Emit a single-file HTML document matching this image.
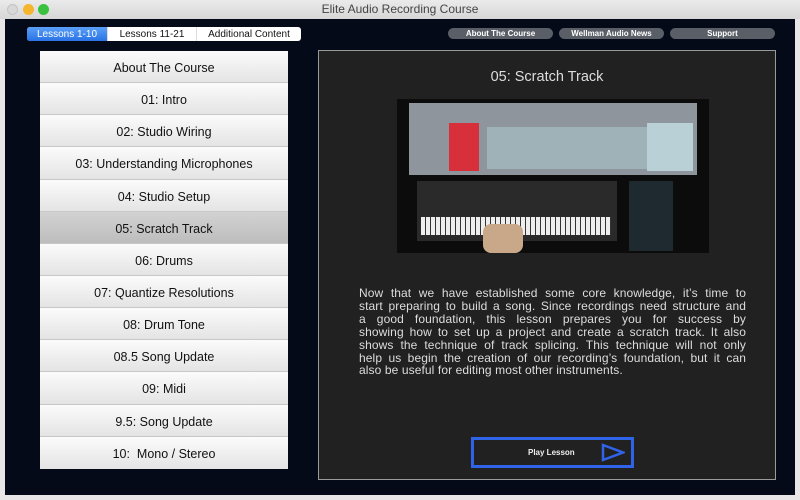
<!DOCTYPE html>
<html><head><meta charset="utf-8"><style>
*{margin:0;padding:0;box-sizing:border-box}
body{width:800px;height:500px;background:#e8e6e6;font-family:"Liberation Sans",sans-serif;position:relative;overflow:hidden}
.title{position:absolute;left:0;top:0;width:800px;height:19px;background:linear-gradient(#ebebeb,#d6d6d6);text-align:center;font-size:12px;color:#444;line-height:18px}
.dot{position:absolute;top:4px;width:11px;height:11px;border-radius:50%}
.main{position:absolute;left:5px;top:19px;width:790px;height:476px;background:#050a18}
.tabs{position:absolute;left:27px;top:27px;height:14px;display:flex;background:#fff;border-radius:3px;font-size:10px;line-height:15px;overflow:hidden}
.tabs div{color:#111;border-right:1px solid #ddd;text-align:center}
.tabs .on{background:linear-gradient(#5aa0f8,#2a72e6);color:#fff}
.pill{position:absolute;top:28px;height:11px;border-radius:6px;background:#5a5e66;color:#fff;font-size:8px;font-weight:bold;text-align:center;line-height:11px}
.list{position:absolute;left:40px;top:51px;width:248px;height:418px;background:#fff}
.item{height:32.15px;border-bottom:1px solid #c8c8c8;background:linear-gradient(#fbfbfb,#e4e4e4);text-align:center;line-height:34px;font-size:12.5px;color:#111}
.item.sel{background:linear-gradient(#d2d2d2,#bdbdbd)}
.panel{position:absolute;left:318px;top:50px;width:458px;height:430px;background:#212121;border:1px solid #9a9a9a}
.panel h1{position:absolute;top:18px;width:100%;text-align:center;font-weight:normal;font-size:14.5px;color:#ddd}
.img{position:absolute;left:78px;top:48px;width:312px;height:154px;background:#0c0c0c;overflow:hidden}
.txt{position:absolute;left:40px;top:236px;width:387px;font-size:12px;line-height:12.9px;color:#ddd;letter-spacing:0.1px}
.txt div{text-align:justify;text-align-last:justify;white-space:nowrap}
.txt div.l{text-align-last:left}
.play{position:absolute;left:152px;top:386px;width:163px;height:31px;border:3px solid #2f63e8;color:#eee;font-size:8px;font-weight:bold;line-height:25px;padding-left:54px}
</style></head><body>
<div class="title">Elite Audio Recording Course</div>
<div class="dot" style="left:7px;background:#d8d8d8;border:1px solid #c4c4c4"></div>
<div class="dot" style="left:23px;background:#f5b52c"></div>
<div class="dot" style="left:38px;background:#3ac23f"></div>
<div class="main"></div>
<div class="tabs"><div class="on" style="width:81px">Lessons 1-10</div><div style="width:89px">Lessons 11-21</div><div style="width:104px;border:none">Additional Content</div></div>
<div class="pill" style="left:448px;width:105px">About The Course</div>
<div class="pill" style="left:559px;width:105px">Wellman Audio News</div>
<div class="pill" style="left:670px;width:105px">Support</div>
<div class="list">
<div class="item">About The Course</div><div class="item">01: Intro</div><div class="item">02: Studio Wiring</div><div class="item">03: Understanding Microphones</div><div class="item">04: Studio Setup</div><div class="item sel">05: Scratch Track</div><div class="item">06: Drums</div><div class="item">07: Quantize Resolutions</div><div class="item">08: Drum Tone</div><div class="item">08.5 Song Update</div><div class="item">09: Midi</div><div class="item">9.5: Song Update</div><div class="item" style="border:none">10:&nbsp; Mono / Stereo</div>
</div>
<div class="panel">
<h1>05: Scratch Track</h1>
<div class="img">
<div style="position:absolute;left:12px;top:4px;width:288px;height:72px;background:#8e959c"></div>
<div style="position:absolute;left:52px;top:24px;width:30px;height:48px;background:#d8303a"></div>
<div style="position:absolute;left:90px;top:28px;width:160px;height:42px;background:#9fb2b8"></div>
<div style="position:absolute;left:250px;top:24px;width:46px;height:48px;background:#b9d0d6"></div>
<div style="position:absolute;left:20px;top:82px;width:200px;height:60px;background:#2a2a2a"></div>
<div style="position:absolute;left:24px;top:118px;width:190px;height:18px;background:repeating-linear-gradient(90deg,#eee 0 4px,#333 4px 5px)"></div>
<div style="position:absolute;left:232px;top:82px;width:44px;height:70px;background:#1e2a30"></div>
<div style="position:absolute;left:86px;top:125px;width:40px;height:29px;background:#c9a88a;border-radius:8px"></div>
</div>
<div class="txt">
<div>Now that we have established some core knowledge, it’s time to</div>
<div>start preparing to build a song. Since recordings need structure and</div>
<div>a good foundation, this lesson prepares you for success by</div>
<div>showing how to set up a project and create a scratch track. It also</div>
<div>shows the technique of track splicing. This technique will not only</div>
<div>help us begin the creation of our recording’s foundation, but it can</div>
<div class="l">also be useful for editing most other instruments.</div>
</div>
<div class="play">Play Lesson
<svg style="position:absolute;right:6px;top:3px" width="24" height="19" viewBox="0 0 24 19"><path d="M2 2 L22 9.5 L2 17 Z" fill="none" stroke="#2f63e8" stroke-width="2.5"/></svg></div>
</div>
</body></html>
